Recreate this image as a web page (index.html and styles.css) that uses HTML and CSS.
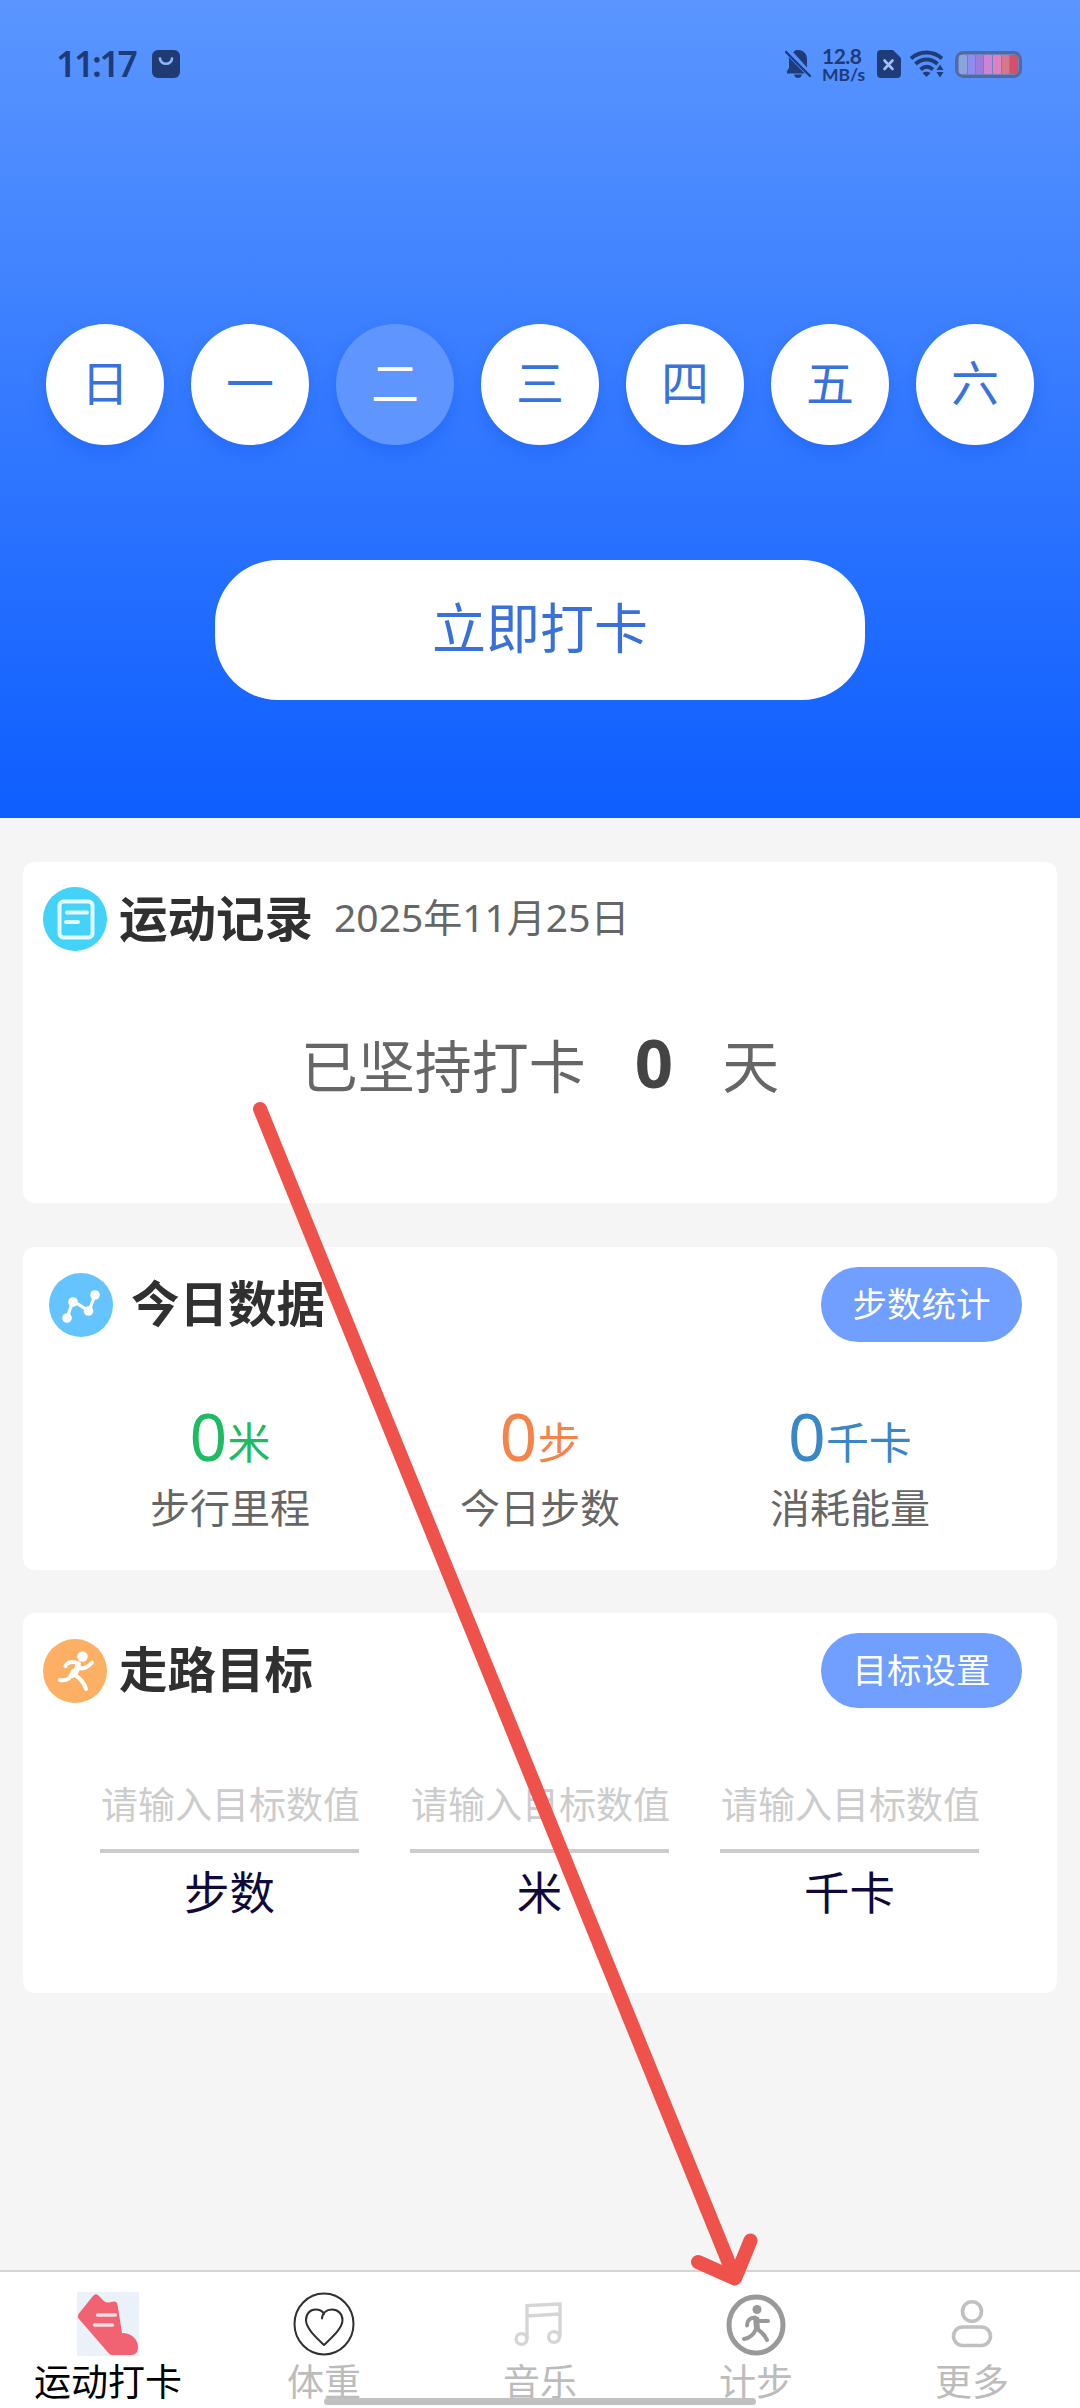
FILE: index.html
```html
<!DOCTYPE html>
<html lang="zh-CN">
<head>
<meta charset="utf-8">
<title>运动打卡</title>
<link rel="stylesheet" href="styles.css">
</head>
<body>
<div class="screen">
  <header class="hero">
    <div class="status">
      <span class="clock">11:17</span>
      <svg class="bag" width="28" height="28" viewBox="0 0 28 28"><rect width="28" height="28" rx="6" fill="#203a72"/><path d="M8 8.500a6 5.200 0 0 0 12 0" fill="none" stroke="#8fb6fa" stroke-width="2.600" stroke-linecap="round"/></svg>
      <svg class="bell" width="26" height="30" viewBox="0 0 26 30"><path d="M8.200 3.200C9.600 1.600 11 1 13 1c5.600 0 9 4 9 9v8.500L8.200 3.200ZM3.600 8 19.800 24.500H2v-2.500l2-3v-8c0-1.100-.3-2-.4-3ZM9 25.500h8c-.5 2-2 3.500-4 3.500s-3.500-1.500-4-3.500Z" fill="#203c78"/><path d="m1 3 24 24" stroke="#203c78" stroke-width="2.400" stroke-linecap="round"/></svg>
      <div class="speed"><span class="speed-num">12.8</span><span class="speed-unit">MB/s</span></div>
      <svg class="sim" width="24" height="28" viewBox="0 0 24 28"><path d="M4 0h12l8 8v16a4 4 0 0 1-4 4H4a4 4 0 0 1-4-4V4a4 4 0 0 1 4-4Z" fill="#203c78"/><path d="m7.500 10.500 8 8.500m0-8.500-8 8.500" stroke="#9fc0fb" stroke-width="2.600" stroke-linecap="round"/></svg>
      <svg class="wifi" width="34" height="28" viewBox="0 0 34 28"><g fill="none" stroke="#203c78" stroke-width="3.800"><path d="M1 8.500c9-8 22-8 31 0"/><path d="M5.500 14c6.500-6 15.500-6 22 0"/><path d="M10.500 19.500c4-3.500 8.500-3.500 12.500 0"/></g><path d="M12.500 23c2.500-1.800 5.500-1.800 8 0L16.500 27ZM30 14.500l3.500 5.500h-7ZM26.500 22h7l-3.500 5.500Z" fill="#203c78"/></svg>
      <svg class="battery" width="67" height="27" viewBox="0 0 67 27"><rect x="1.500" y="1.500" width="64" height="24" rx="7" fill="#6c84c6" stroke="#56699f" stroke-width="3"/><rect x="4" y="4" width="8" height="19" rx="2" fill="#8ba5dc"/><rect x="13" y="4" width="7" height="19" rx="1" fill="#8f8df0"/><rect x="21" y="4" width="7" height="19" rx="1" fill="#9c7ddc"/><rect x="29" y="4" width="8" height="19" rx="1" fill="#cf83d3"/><rect x="38" y="4" width="8" height="19" rx="1" fill="#dc83bd"/><rect x="47" y="4" width="7" height="19" rx="1" fill="#d4798b"/><rect x="55" y="4" width="8" height="19" rx="2" fill="#d4506a"/></svg>
    </div>
    <div class="week">
      <span class="day">日</span><span class="day">一</span><span class="day today">二</span><span class="day">三</span><span class="day">四</span><span class="day">五</span><span class="day">六</span>
    </div>
    <div class="checkin">立即打卡</div>
  </header>

  <main class="cards">
    <section class="card record">
      <div class="head">
        <svg class="icon" width="64" height="64" viewBox="0 0 64 64"><circle cx="32" cy="32" r="32" fill="#43d3f8"/><rect x="16.500" y="14.500" width="33" height="36" rx="4" fill="none" stroke="#e4fbff" stroke-width="4"/><path d="M24 25.500h20M23 35h12" stroke="#e4fbff" stroke-width="4" stroke-linecap="round"/></svg>
        <h2>运动记录</h2><span class="date">2025年11月25日</span>
      </div>
      <div class="streak"><span>已坚持打卡</span><b>0</b><span>天</span></div>
    </section>

    <section class="card today-data">
      <div class="head">
        <svg class="icon" width="64" height="64" viewBox="0 0 64 64"><circle cx="32" cy="32" r="32" fill="#65c4fd"/><path d="m18 45 6-17 16 10 6-16" fill="none" stroke="#fff" stroke-width="3.200"/><g fill="#fff"><circle cx="18" cy="45" r="4.800"/><circle cx="24" cy="29" r="4.800"/><circle cx="39.500" cy="38" r="4.800"/><circle cx="46" cy="22" r="4.800"/></g></svg>
        <h2>今日数据</h2><span class="pill">步数统计</span>
      </div>
      <div class="columns">
        <div class="stat"><div class="value green"><span>0</span><small>米</small></div><div class="label">步行里程</div></div>
        <div class="stat"><div class="value orange"><span>0</span><small>步</small></div><div class="label">今日步数</div></div>
        <div class="stat"><div class="value blue"><span>0</span><small>千卡</small></div><div class="label">消耗能量</div></div>
      </div>
    </section>

    <section class="card goals">
      <div class="head">
        <svg class="icon" width="64" height="64" viewBox="0 0 64 64"><circle cx="32" cy="32" r="32" fill="#fdb064"/><circle cx="39.500" cy="17.500" r="5.200" fill="#fff"/><path d="M22.500 27c2-4 7-5 13.500-2.500l-6.500 12.500" fill="none" stroke="#fff" stroke-width="4" stroke-linecap="round" stroke-linejoin="round"/><path d="m34 26 4 3.500c4 0 7-1.500 11-6M30 32c-3 8-6 10-13 9M31 35c6 5 10 8 12 15" fill="none" stroke="#fff" stroke-width="4" stroke-linecap="round" stroke-linejoin="round"/><path d="m34 24 4 4-4 9-6-2Z" fill="#fff"/></svg>
        <h2>走路目标</h2><span class="pill">目标设置</span>
      </div>
      <div class="columns">
        <div class="goal"><div class="field">请输入目标数值</div><div class="unit">步数</div></div>
        <div class="goal"><div class="field">请输入目标数值</div><div class="unit">米</div></div>
        <div class="goal"><div class="field">请输入目标数值</div><div class="unit">千卡</div></div>
      </div>
    </section>
  </main>

  <nav class="tabs">
    <div class="tab active">
      <svg width="62" height="64" viewBox="0 0 62 64"><rect width="62" height="64" fill="#eaf1f9"/><path d="M1.500 22 16 4q3-3.500 6 0l5 5q3 2.500 7 1l3-.5q3 0 3.500 3L45 41c9 0 16 6 16 14q0 8-7 8H35q-2 0-4-2.500L2 27q-2-2.500-.5-5Z" fill="#f16272"/><path d="M20.500 23h18M17.500 33h18" stroke="#fbdce5" stroke-width="3.400" stroke-linecap="round"/></svg>
      <span>运动打卡</span>
    </div>
    <div class="tab">
      <svg width="62" height="64" viewBox="0 0 62 64"><g fill="none" stroke="#303030" stroke-width="2" stroke-linecap="round" stroke-linejoin="round"><ellipse cx="31" cy="32" rx="29.500" ry="30.500"/><path d="M29 26.500c0-5 4-9 10-9 6 0 10.500 4.500 10.500 10.500C49.500 36 40 44.500 31 53 22 44.500 13 36 13 28c0-6 4-10.500 9.500-10.500 4 0 7 1.500 8.500 4.500"/></g></svg>
      <span>体重</span>
    </div>
    <div class="tab">
      <svg width="62" height="64" viewBox="0 0 62 64"><g fill="none" stroke="#d5d5d5" stroke-width="3.400"><circle cx="12.500" cy="47" r="5.400"/><path d="M18 47V13.500L51 12v33M18 24l33-2"/><circle cx="45" cy="45" r="5.400"/></g></svg>
      <span>音乐</span>
    </div>
    <div class="tab">
      <svg width="62" height="64" viewBox="0 0 62 64"><ellipse cx="31" cy="33" rx="27" ry="28" fill="none" stroke="#999" stroke-width="5"/><circle cx="32" cy="17.500" r="4.500" fill="#999"/><g fill="none" stroke="#999" stroke-width="4" stroke-linecap="round" stroke-linejoin="round"><path d="M22 33.500c0-5 3-8 8-8l4 3.500 9 0"/><path d="M31 27v10c-2 5-6 9-12 10M32 37c5 3 8 6 10 11"/></g><path d="M28 25h6l1 12h-6Z" fill="#999"/></svg>
      <span>计步</span>
    </div>
    <div class="tab">
      <svg width="62" height="64" viewBox="0 0 62 64"><g fill="none" stroke="#c0c0c0" stroke-width="3.600"><ellipse cx="31" cy="19.500" rx="9.500" ry="9.800"/><rect x="12.500" y="35" width="37" height="18.500" rx="9.250"/></g></svg>
      <span>更多</span>
    </div>
  </nav>
  <div class="home-bar"></div>
  <svg class="arrow" width="1080" height="2408" viewBox="0 0 1080 2408"><path d="M260 1109 735 2278M698 2262l37 16.500 15.500-38" fill="none" stroke="#ef524b" stroke-width="14" stroke-linecap="round" stroke-linejoin="round"/></svg>
</div>
</body>
</html>
```
FILE: styles.css
```css
* { box-sizing: border-box; }
body {
  margin: 0;
  background: #f5f5f5;
  font-family: "Noto Sans CJK SC", "Noto Sans", sans-serif;
}
.screen {
  position: relative;
  width: 1080px;
  height: 2408px;
  display: flex;
  flex-direction: column;
  overflow: hidden;
}
span, small, b, h2 { white-space: nowrap; }

.hero {
  height: 818px;
  flex: none;
  background: linear-gradient(#5b96ff, #0e5eff);
}
.status {
  height: 128px;
  padding: 0 56px;
  display: flex;
  align-items: center;
  color: #1d3b78;
  font-family: "Noto Sans", sans-serif;
}
.clock {
  width: 96px;
  margin-bottom: 2px;
  font-size: 35.500px;
  font-weight: 600;
  line-height: 50px;
  letter-spacing: -2.300px;
}
.bell { margin-left: 605px; }
.speed {
  display: flex;
  flex-direction: column;
  width: 54px;
  margin-left: 11px;
  font-family: Lato, "Noto Sans", sans-serif;
  font-weight: 700;
}
.speed-num { font-size: 21px; line-height: 21px; letter-spacing: -.5px; }
.speed-unit { font-size: 17.500px; line-height: 18px; }
.sim { margin-left: 1px; }
.wifi { margin-left: 9px; }
.battery { margin-left: 11px; }

.week {
  display: flex;
  justify-content: space-between;
  padding: 0 46px;
  margin-top: 196px;
}
.day {
  width: 118px;
  height: 121px;
  padding-bottom: 9px;
  border-radius: 50%;
  display: flex;
  align-items: center;
  justify-content: center;
  background: #fff;
  color: #3a72dc;
  font-size: 48px;
  box-shadow: 0 8px 18px rgba(20, 90, 245, .45);
}
.day.today { background: #5f95ff; color: #fff; }
.checkin {
  width: 650px;
  height: 140px;
  margin: 115px auto 0;
  padding-bottom: 10px;
  border-radius: 63px;
  display: flex;
  align-items: center;
  justify-content: center;
  background: #fff;
  color: #3970da;
  font-size: 54px;
}

.cards {
  padding: 44px 23px 0;
  display: flex;
  flex-direction: column;
}
.card { background: #fff; border-radius: 12px; }
.record { height: 341px; padding: 25px 20px; }
.today-data { height: 323px; margin-top: 44px; padding: 20px 35px 0 26px; }
.goals { height: 380px; margin-top: 43px; padding: 20px 35px 0 20px; }
.head { display: flex; align-items: center; }
.record .head { height: 64px; }
.today-data .head, .goals .head { height: 75px; }
h2 {
  margin: 0 0 7px 12px;
  font-size: 48.500px;
  line-height: 60px;
  font-weight: 700;
  color: #303030;
}
.today-data h2 { margin-left: 18px; }
.date {
  margin: 0 0 4px 21px;
  font-family: "Noto Sans", "Noto Sans CJK SC", sans-serif;
  font-size: 39px;
  line-height: 50px;
  color: #666;
}
.streak {
  display: flex;
  justify-content: center;
  align-items: baseline;
  margin-top: 66px;
  color: #666;
  font-size: 57px;
  line-height: 90px;
}
.streak b {
  margin: 0 49px;
  font-family: "Noto Sans", sans-serif;
  font-size: 67px;
  color: #444;
}
.pill {
  width: 201px;
  height: 75px;
  margin-left: auto;
  padding-bottom: 6px;
  border-radius: 38px;
  display: flex;
  align-items: center;
  justify-content: center;
  background: #709fff;
  color: #fff;
  font-size: 34.500px;
}
.columns { display: flex; }
.today-data .columns { margin-left: 26px; margin-top: 48px; }
.stat { width: 310px; text-align: center; }
.value {
  display: flex;
  justify-content: center;
  align-items: baseline;
  height: 88px;
  line-height: 90px;
}
.value span { font-family: "Noto Sans", sans-serif; font-size: 66px; }
.value small { font-size: 43px; transform: translateY(-2px); }
.green { color: #1fbb63; }
.orange { color: #f48449; }
.blue { color: #3987c5; }
.label { font-size: 40px; line-height: 56px; color: #666; }

.goals .columns { gap: 51px; margin: 58px 0 0 57px; }
.goal { width: 259px; }
.field {
  height: 87px;
  border-bottom: 4px solid #ccc;
  padding-left: 1px;
  font-size: 37px;
  line-height: 74px;
  white-space: nowrap;
  color: #ccc;
}
.unit {
  text-align: center;
  font-size: 45.500px;
  line-height: 60px;
  margin-top: 7px;
  color: #100a3c;
}

.tabs {
  height: 138px;
  margin-top: auto;
  flex: none;
  display: flex;
  background: #fff;
  border-top: 2px solid #d4d4d4;
}
.tab {
  flex: 1;
  display: flex;
  flex-direction: column;
  align-items: center;
  padding-top: 20px;
  color: #bcbcbc;
  font-size: 37px;
  line-height: 50px;
}
.tab svg { margin-bottom: -1px; }
.tab.active { color: #000; }
.home-bar {
  position: absolute;
  left: 324px;
  top: 2398px;
  width: 432px;
  height: 7px;
  border-radius: 4px;
  background: #c1c1c1;
}
.arrow { position: absolute; left: 0; top: 0; pointer-events: none; }
```
